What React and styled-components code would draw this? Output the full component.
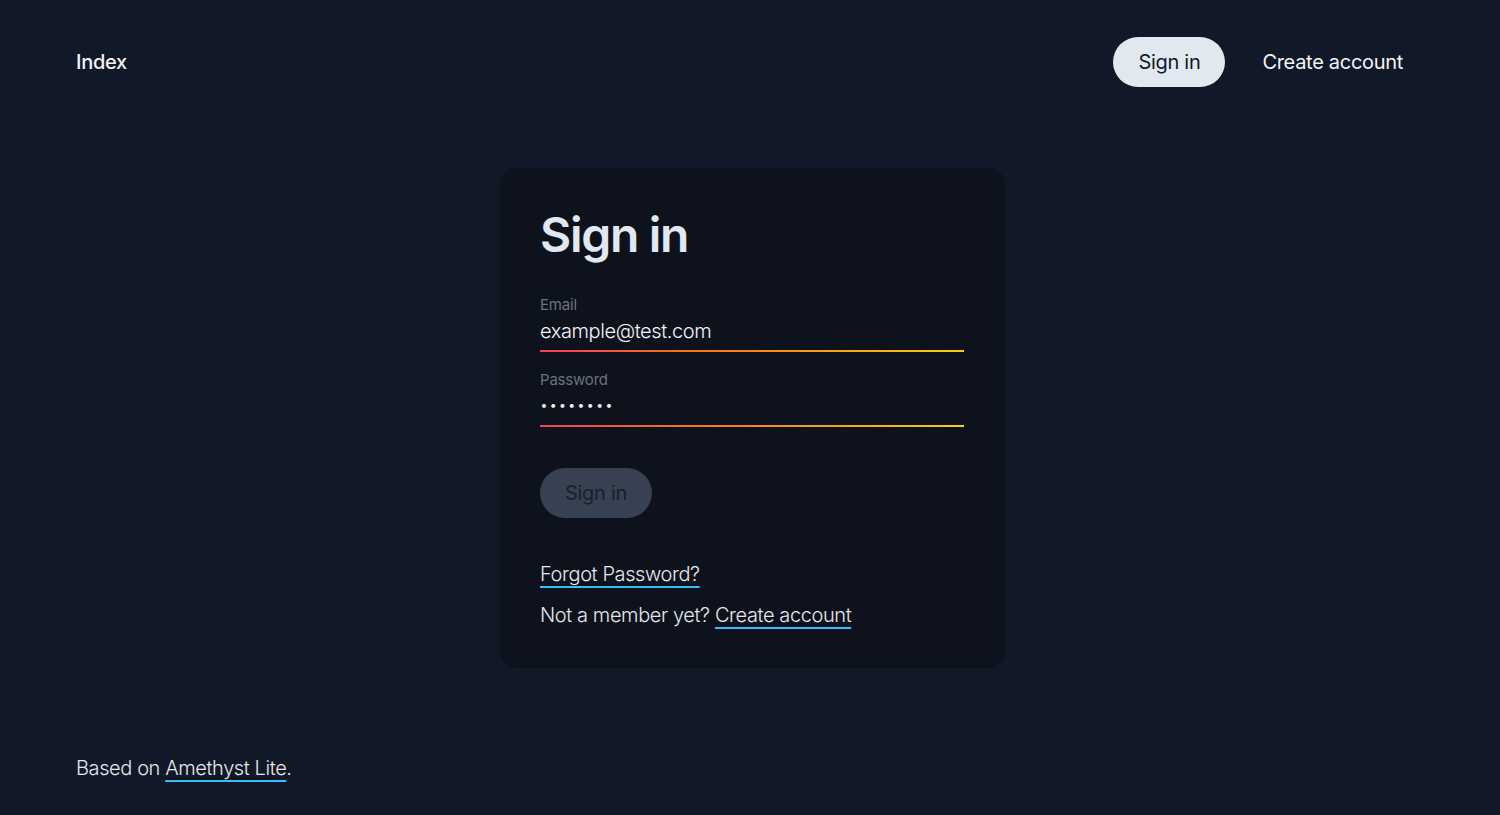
import React from 'react';
import styled, { createGlobalStyle } from 'styled-components';

const GlobalStyle = createGlobalStyle`
    html, body {
        margin: 0;
        padding: 0;
        background: #111827;
    }
    body {
        font-family: Inter, "Noto Sans", "Liberation Sans", sans-serif;
        color: #e5e7eb;
        -webkit-font-smoothing: antialiased;
    }
    * {
        box-sizing: border-box;
    }
`;

const fields = [
    { name: 'email', label: 'Email', type: 'email', value: 'example@test.com' },
    { name: 'password', label: 'Password', type: 'password', value: 'password' }
];

const App = () => {
    return (
        <>
            <GlobalStyle/>
            <Page>
                <Header>
                    <Brand href="#">Index</Brand>
                    <Nav>
                        <NavButton href="#" $active>Sign in</NavButton>
                        <NavButton href="#">Create account</NavButton>
                    </Nav>
                </Header>
                <Main>
                    <Card>
                        <Title>Sign in</Title>
                        <Form onSubmit={e => e.preventDefault()}>
                            {fields.map(field =>
                                <Field key={field.name}>
                                    <Label htmlFor={field.name}>{field.label}</Label>
                                    <Input
                                        id={field.name}
                                        type={field.type}
                                        defaultValue={field.value}
                                    />
                                </Field>
                            )}
                            <SubmitButton type="submit" disabled>Sign in</SubmitButton>
                        </Form>
                        <Links>
                            <Text><Link href="#">Forgot Password?</Link></Text>
                            <Text>Not a member yet? <Link href="#">Create account</Link></Text>
                        </Links>
                    </Card>
                </Main>
                <Footer>
                    <Text>Based on <Link href="#">Amethyst Lite</Link>.</Text>
                </Footer>
            </Page>
        </>
    );
};

export default App;


const Page = styled.div`
    min-height: 100vh;
    display: flex;
    flex-direction: column;
`;

const Header = styled.header`
    height: 124px;
    display: flex;
    align-items: center;
    justify-content: space-between;
    padding: 0 72px 0 76px;
`;

const Brand = styled.a`
    font-size: 20px;
    font-weight: 500;
    letter-spacing: -0.3px;
    color: #f3f4f6;
    text-decoration: none;
`;

const Nav = styled.nav`
    display: flex;
    align-items: center;
    gap: 12px;
`;

const NavButton = styled.a`
    display: inline-flex;
    align-items: center;
    height: 50px;
    padding: 0 25px;
    border-radius: 999px;
    font-size: 20px;
    font-weight: 400;
    letter-spacing: -0.3px;
    text-decoration: none;
    color: ${props => props.$active ? '#111827' : '#f3f4f6'};
    background: ${props => props.$active ? '#e2e8f0' : 'transparent'};
`;

const Main = styled.main`
    display: flex;
    justify-content: center;
    padding: 44px 71px 0 76px;
`;

const Card = styled.section`
    width: 505px;
    height: 500px;
    padding: 38px 41px 0 40px;
    border-radius: 16px;
    background: #0e121d;
`;

const Title = styled.h1`
    margin: 0;
    font-size: 48px;
    line-height: 58px;
    font-weight: 600;
    color: #e2e8f0;
    letter-spacing: -1.3px;
`;

const Form = styled.form`
    margin-top: 31px;
    display: flex;
    flex-direction: column;
`;

const Field = styled.div`
    position: relative;
    display: flex;
    flex-direction: column;
    padding-bottom: 5px;
    margin-bottom: 18px;

    &:after {
        content: "";
        position: absolute;
        left: 0;
        right: 0;
        bottom: 0;
        height: 2px;
        background: linear-gradient(90deg, #f43f5e 0%, #f97316 35%, #facc15 100%);
    }
`;

const Label = styled.label`
    font-size: 15px;
    line-height: 20px;
    font-weight: 400;
    letter-spacing: -0.2px;
    color: #6b7280;
`;

const Input = styled.input`
    background: transparent;
    border: none;
    outline: none;
    padding: 0;
    height: 32px;
    font-family: inherit;
    font-size: 20px;
    font-weight: 300;
    letter-spacing: -0.4px;
    color: #f3f4f6;

    &[type="password"] {
        font-size: 14px;
        letter-spacing: 1.4px;
        padding-bottom: 4px;
    }
`;

const SubmitButton = styled.button`
    align-self: flex-start;
    margin-top: 23px;
    height: 50px;
    padding: 0 25px;
    border: none;
    border-radius: 999px;
    background: #374151;
    font-family: inherit;
    font-size: 20px;
    font-weight: 400;
    letter-spacing: -0.3px;
    color: #1a1f2a;
    cursor: default;
`;

const Links = styled.div`
    margin-top: 41px;
    display: flex;
    flex-direction: column;
    gap: 11px;
`;

const Text = styled.p`
    margin: 0;
    font-size: 20px;
    line-height: 30px;
    font-weight: 300;
    letter-spacing: -0.4px;
    color: #e5e7eb;
`;

const Link = styled.a`
    color: #e5e7eb;
    text-decoration: underline;
    text-decoration-color: #38bdf8;
    text-decoration-thickness: 2px;
    text-underline-offset: 5px;
`;

const Footer = styled.footer`
    margin-top: auto;
    padding: 0 76px 32px;
`;
